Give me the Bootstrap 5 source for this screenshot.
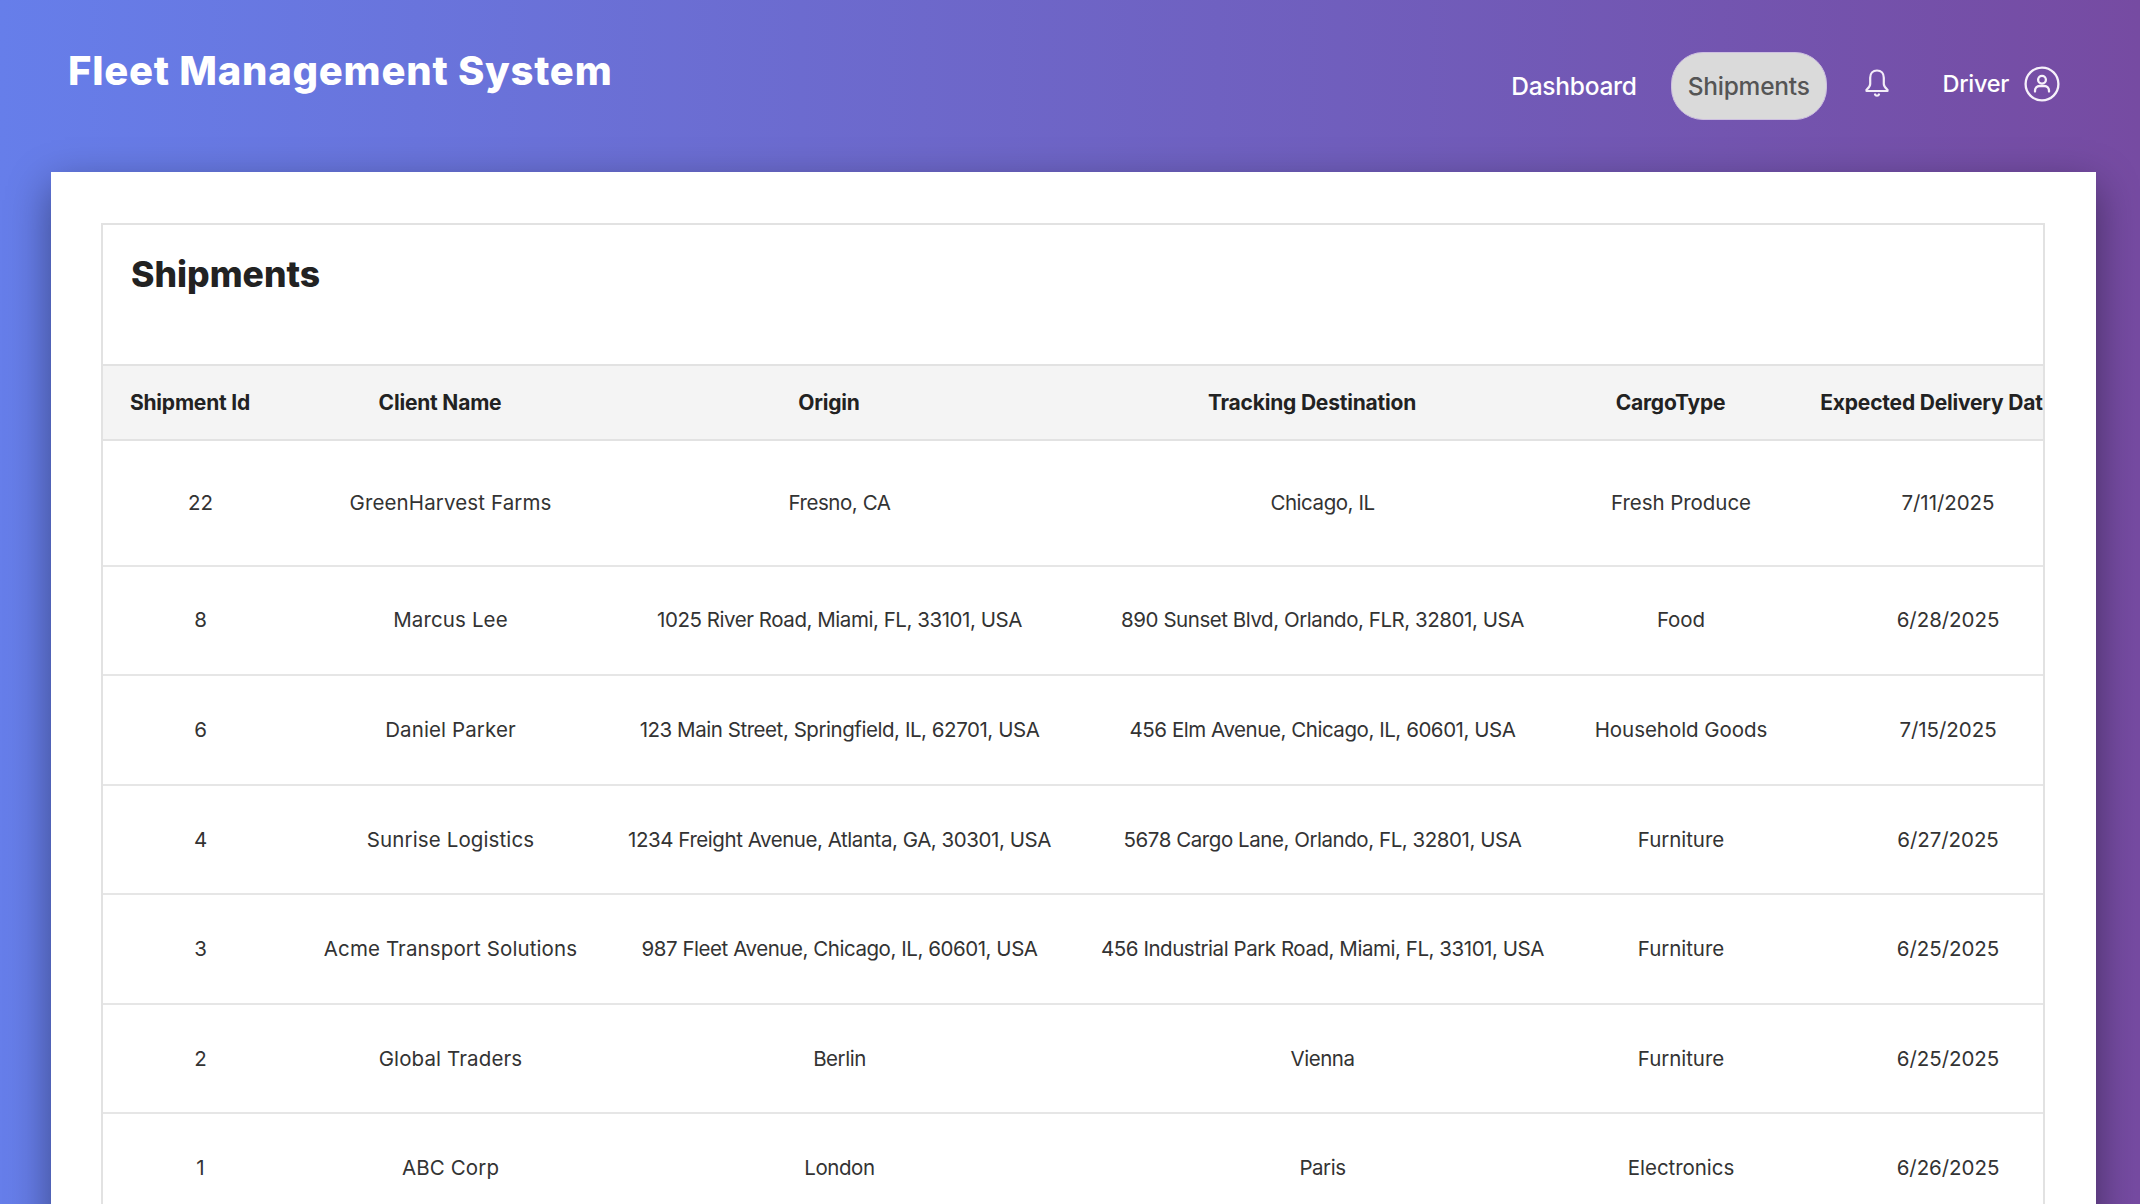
<!DOCTYPE html>
<html lang="en"><head><meta charset="utf-8"><title>Fleet Management System</title>
<link href="https://cdn.jsdelivr.net/npm/bootstrap@5.3.0/dist/css/bootstrap.min.css" rel="stylesheet">
<style>
html,body{height:100%;overflow:hidden}
body{background:linear-gradient(90deg,#667eea,#764ba2);font-family:Inter,"Liberation Sans",sans-serif;color:#333}
.fleet-top{height:172px;padding:0 80px 0 68px;align-items:flex-start}
.fleet-title{font-size:40px;font-weight:800;color:#fff;margin:47px 0 0;line-height:48px;letter-spacing:.75px}
.fleet-nav{margin-top:52px}
.fleet-link{font-size:24.500px;font-weight:500;line-height:68px;height:68px;padding:0 16px;color:#fff;border-radius:32px;text-decoration:none;letter-spacing:-.25px}
.fleet-link.is-on{background:#dadada;color:#555;margin:0 0 0 18px;border:1px solid #cdbfe0;line-height:66px}
.fleet-bell{margin:17px 0 0 38px;align-self:flex-start;line-height:0}
.fleet-user{margin-left:54px;color:#fff;font-size:23.500px;font-weight:500;gap:15px;letter-spacing:-.3px;margin-top:13px;height:38px}
.fleet-panel{margin:0 44px 0 51px;height:1100px;background:#fff;padding:51px 51px 0 50px;box-shadow:0 14px 40px rgba(0,0,0,.42)}
.fleet-box{border:2px solid #e2e2e2;border-bottom:0;height:1040px;overflow:hidden}
.fleet-heading{height:139px;padding:26px 0 0 28px;margin:0;font-size:35.500px;font-weight:800;color:#222;line-height:48px}
.fleet-table{table-layout:fixed;width:2000px;margin:0;text-align:center;color:#333;font-size:20.500px;letter-spacing:-.05px}
.fleet-table th{background:#f4f4f4;color:#222;font-weight:700;font-size:21px;letter-spacing:-.2px;height:75px;vertical-align:middle;padding:1px 47px 0 26px;white-space:nowrap;border-top:2px solid #e2e2e2;border-bottom:2px solid #e2e2e2;text-align:center;overflow:hidden}
.fleet-table td{vertical-align:middle;padding:1px 20px 0;height:109.600px;white-space:nowrap;border-bottom:2px solid #e6e6e6;color:#333;font-weight:400}
.fleet-table td:nth-child(2){letter-spacing:.12px}
.fleet-table td:nth-child(3),.fleet-table td:nth-child(4){letter-spacing:-.45px}
.fleet-table tbody tr:first-child td{height:125.500px}
</style></head>
<body>
<nav class="navbar fleet-top d-flex justify-content-between flex-nowrap">
  <h1 class="fleet-title">Fleet Management System</h1>
  <div class="fleet-nav d-flex align-items-start">
    <a class="fleet-link" href="#">Dashboard</a>
    <a class="fleet-link is-on" href="#">Shipments</a>
    <span class="fleet-bell"><svg width="24" height="28" viewBox="0 0 24 28" fill="none" stroke="#f3edf8" stroke-width="2.200"><path d="M12 1.500c-4.200 0-6.800 3-6.800 7.200v6.300c0 2.600-1.700 4-3.700 5.800v1.200h21v-1.200c-2-1.800-3.700-3.200-3.700-5.800v-6.300c0-4.200-2.600-7.200-6.800-7.200z" stroke-linejoin="round"/><path d="M10 25.500c.5 1.500 3.500 1.500 4 0" stroke-linecap="round"/></svg></span>
    <div class="fleet-user d-flex align-items-center"><span>Driver</span>
      <svg width="36" height="36" viewBox="0 0 36 36" fill="none" stroke="#f6f1fa" stroke-width="2.300"><circle cx="18" cy="18" r="16.400"/><circle cx="18" cy="13.800" r="3.900"/><path d="M11 25.500v-.8c0-2.600 2-4.700 4.500-4.700h5c2.500 0 4.500 2.100 4.500 4.700v.8" stroke-linecap="round"/></svg></div>
  </div>
</nav>
<main class="fleet-panel">
  <div class="fleet-box">
    <h2 class="fleet-heading">Shipments</h2>
    <table class="table fleet-table">
      <colgroup><col style="width:195px"><col style="width:305px"><col style="width:473px"><col style="width:493px"><col style="width:224px"><col style="width:310px"></colgroup>
      <thead><tr><th>Shipment Id</th><th>Client Name</th><th>Origin</th><th>Tracking Destination</th><th>CargoType</th><th>Expected Delivery Date</th></tr></thead>
      <tbody>
      <tr><td>22</td><td>GreenHarvest Farms</td><td>Fresno, CA</td><td>Chicago, IL</td><td>Fresh Produce</td><td>7/11/2025</td></tr>
      <tr><td>8</td><td>Marcus Lee</td><td>1025 River Road, Miami, FL, 33101, USA</td><td>890 Sunset Blvd, Orlando, FLR, 32801, USA</td><td>Food</td><td>6/28/2025</td></tr>
      <tr><td>6</td><td>Daniel Parker</td><td>123 Main Street, Springfield, IL, 62701, USA</td><td>456 Elm Avenue, Chicago, IL, 60601, USA</td><td>Household Goods</td><td>7/15/2025</td></tr>
      <tr><td>4</td><td>Sunrise Logistics</td><td>1234 Freight Avenue, Atlanta, GA, 30301, USA</td><td>5678 Cargo Lane, Orlando, FL, 32801, USA</td><td>Furniture</td><td>6/27/2025</td></tr>
      <tr><td>3</td><td>Acme Transport Solutions</td><td>987 Fleet Avenue, Chicago, IL, 60601, USA</td><td>456 Industrial Park Road, Miami, FL, 33101, USA</td><td>Furniture</td><td>6/25/2025</td></tr>
      <tr><td>2</td><td>Global Traders</td><td>Berlin</td><td>Vienna</td><td>Furniture</td><td>6/25/2025</td></tr>
      <tr><td>1</td><td>ABC Corp</td><td>London</td><td>Paris</td><td>Electronics</td><td>6/26/2025</td></tr>
      </tbody>
    </table>
  </div>
</main>
<script src="https://cdn.jsdelivr.net/npm/bootstrap@5.3.0/dist/js/bootstrap.bundle.min.js"></script>
</body></html>
